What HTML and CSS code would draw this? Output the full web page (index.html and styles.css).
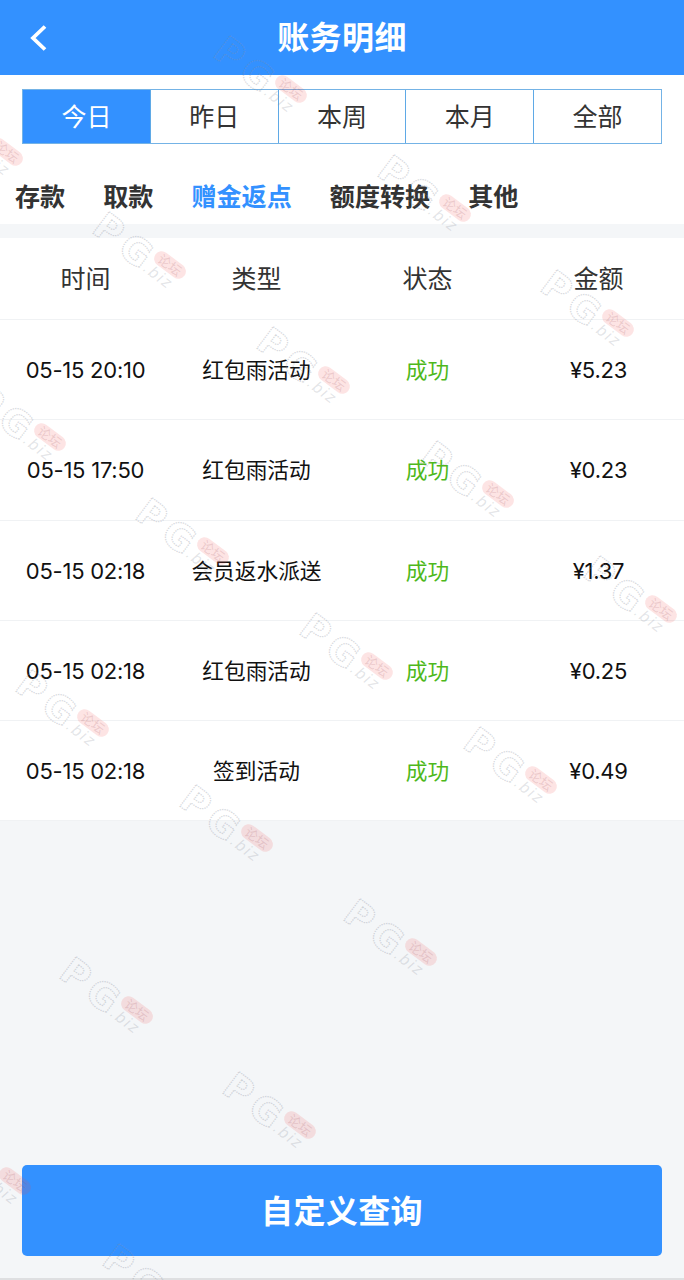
FILE: index.html
```html
<!DOCTYPE html>
<html lang="zh-CN">
<head>
    <meta charset="UTF-8">
    <meta name="viewport" content="width=device-width, initial-scale=1.0">

    <title>账务明细</title>

    <link rel="stylesheet" href="styles.css">
</head>
<body>
    <header class="top-bar">
        <a class="back" href="#">
            <svg width="18" height="28" viewBox="0 0 18 28"><path d="M16 2.5 L4 14 L16 25.5"/></svg>
        </a>
        <h1>账务明细</h1>
    </header>

    <div class="filters">
        <ul class="date-tabs">
            <li class="active">今日</li>
            <li>昨日</li>
            <li>本周</li>
            <li>本月</li>
            <li>全部</li>
        </ul>
        <ul class="type-tabs">
            <li>存款</li>
            <li>取款</li>
            <li class="active">赠金返点</li>
            <li>额度转换</li>
            <li>其他</li>
        </ul>
    </div>

    <div class="records">
        <div class="row head">
            <span>时间</span><span>类型</span><span>状态</span><span>金额</span>
        </div>
        <div class="row">
            <span class="num">05-15 20:10</span><span>红包雨活动</span><span class="ok">成功</span><span class="num">¥5.23</span>
        </div>
        <div class="row">
            <span class="num">05-15 17:50</span><span>红包雨活动</span><span class="ok">成功</span><span class="num">¥0.23</span>
        </div>
        <div class="row">
            <span class="num">05-15 02:18</span><span>会员返水派送</span><span class="ok">成功</span><span class="num">¥1.37</span>
        </div>
        <div class="row">
            <span class="num">05-15 02:18</span><span>红包雨活动</span><span class="ok">成功</span><span class="num">¥0.25</span>
        </div>
        <div class="row">
            <span class="num">05-15 02:18</span><span>签到活动</span><span class="ok">成功</span><span class="num">¥0.49</span>
        </div>
    </div>

    <div class="bottom">
        <button class="query">自定义查询</button>
    </div>

    <!-- repeated watermark, origin of each mark is the centre of the red pill -->
    <svg class="watermarks" width="684" height="1280" viewBox="0 0 684 1280">
        <defs>
            <g id="mark">
                <g transform="rotate(37)">
                    <text class="wm-big" x="-84" y="21">P</text>
                    <text class="wm-big" x="-51" y="22">G</text>
                    <text class="wm-small" x="-19" y="21">.biz</text>
                    <rect class="wm-pill" x="-18" y="-7.5" width="36" height="15" rx="7.5"/>
                    <text class="wm-cn" x="0" y="5">论坛</text>
                </g>
            </g>
        </defs>
        <use href="#mark" x="127" y="-26"/>
        <use href="#mark" x="291" y="89"/>
        <use href="#mark" x="7" y="152"/>
        <use href="#mark" x="455" y="208"/>
        <use href="#mark" x="170" y="265"/>
        <use href="#mark" x="618" y="323"/>
        <use href="#mark" x="334" y="380"/>
        <use href="#mark" x="50" y="437"/>
        <use href="#mark" x="498" y="494"/>
        <use href="#mark" x="213" y="551"/>
        <use href="#mark" x="661" y="609"/>
        <use href="#mark" x="377" y="666"/>
        <use href="#mark" x="93" y="723"/>
        <use href="#mark" x="541" y="780"/>
        <use href="#mark" x="257" y="838"/>
        <use href="#mark" x="421" y="952"/>
        <use href="#mark" x="137" y="1010"/>
        <use href="#mark" x="300" y="1125"/>
        <use href="#mark" x="15" y="1181"/>
        <use href="#mark" x="180" y="1297"/>
    </svg>
</body>
</html>
```
FILE: styles.css
```css
* {
    box-sizing: border-box;
    margin: 0;
    padding: 0;
}

body {
    position: relative;
    display: flex;
    flex-direction: column;
    height: 1280px;
    overflow: hidden;
    background: #f4f6f8;
    color: #333;
    font-family: "Noto Sans CJK SC", sans-serif;
}

ul {
    list-style: none;
}


.top-bar {
    display: grid;
    grid-template-columns: 80px 1fr 80px;
    align-items: center;
    height: 75px;
    background: #3391ff;
    color: #fff;
}
.top-bar h1 {
    font-size: 32px;
    line-height: 71px;
    height: 75px;
    letter-spacing: 0.4px;
    text-align: center;
}
.back {
    display: flex;
    padding-left: 29px;
}
.back path {
    fill: none;
    stroke: #fff;
    stroke-width: 3.8;
}


.filters {
    height: 149px;
    padding-top: 14px;
    background: #fff;
}
.date-tabs {
    display: flex;
    height: 55px;
    margin: 0 22px;
    border: 1px solid #74b3e6;
}
.date-tabs li {
    flex: 1;
    font-size: 25px;
    line-height: 50px;
    text-align: center;
}
.date-tabs li + li {
    border-left: 1px solid #5fa9e6;
}
.date-tabs .active {
    background: #3391ff;
    color: #fff;
}

.type-tabs {
    display: flex;
    gap: 38px;
    padding: 25px 0 0 15px;
    font-size: 25.1px;
    font-weight: bold;
    line-height: 52px;
}
.type-tabs .active {
    color: #3391ff;
}


.records {
    margin-top: 14px;
    background: #fff;
}
.row {
    display: grid;
    grid-template-columns: repeat(4, 1fr);
    align-items: center;
    height: 100.3px;
    padding-bottom: 2px;
    border-bottom: 1px solid #f0f2f4;
    color: #111;
    font-size: 21.7px;
    text-align: center;
}
.row.head {
    height: 82px;
    padding-bottom: 3px;
    color: #333;
    font-size: 25px;
}
.row .ok {
    color: #4eb81b;
}
.row .num {
    padding-top: 3px;
    font-family: Inter, sans-serif;
    font-size: 22px;
    letter-spacing: -0.25px;
}


.bottom {
    margin-top: auto;
    padding: 0 22px 22px;
    border-bottom: 2px solid #dedfe1;
}
.query {
    display: block;
    width: 100%;
    height: 91px;
    padding-bottom: 2px;
    border: none;
    border-radius: 5px;
    background: #3391ff;
    color: #fff;
    font: bold 32px/89px "Noto Sans CJK SC", sans-serif;
    letter-spacing: 0.4px;
}


.watermarks {
    position: absolute;
    top: 0;
    left: 0;
    pointer-events: none;
}
.wm-big {
    fill: none;
    stroke: #8a8f9c;
    stroke-opacity: 0.34;
    stroke-width: 1.3;
    stroke-dasharray: 1.4 1;
    font: bold 37px "DejaVu Sans", sans-serif;
}
.wm-small {
    fill: #8a8f9c;
    fill-opacity: 0.24;
    font: italic 16px "Liberation Sans", sans-serif;
    letter-spacing: 2px;
}
.wm-pill {
    fill: #f04848;
    fill-opacity: 0.15;
}
.wm-cn {
    fill: #a05560;
    fill-opacity: 0.2;
    font: 13px "Noto Sans CJK SC", sans-serif;
    text-anchor: middle;
}
```
